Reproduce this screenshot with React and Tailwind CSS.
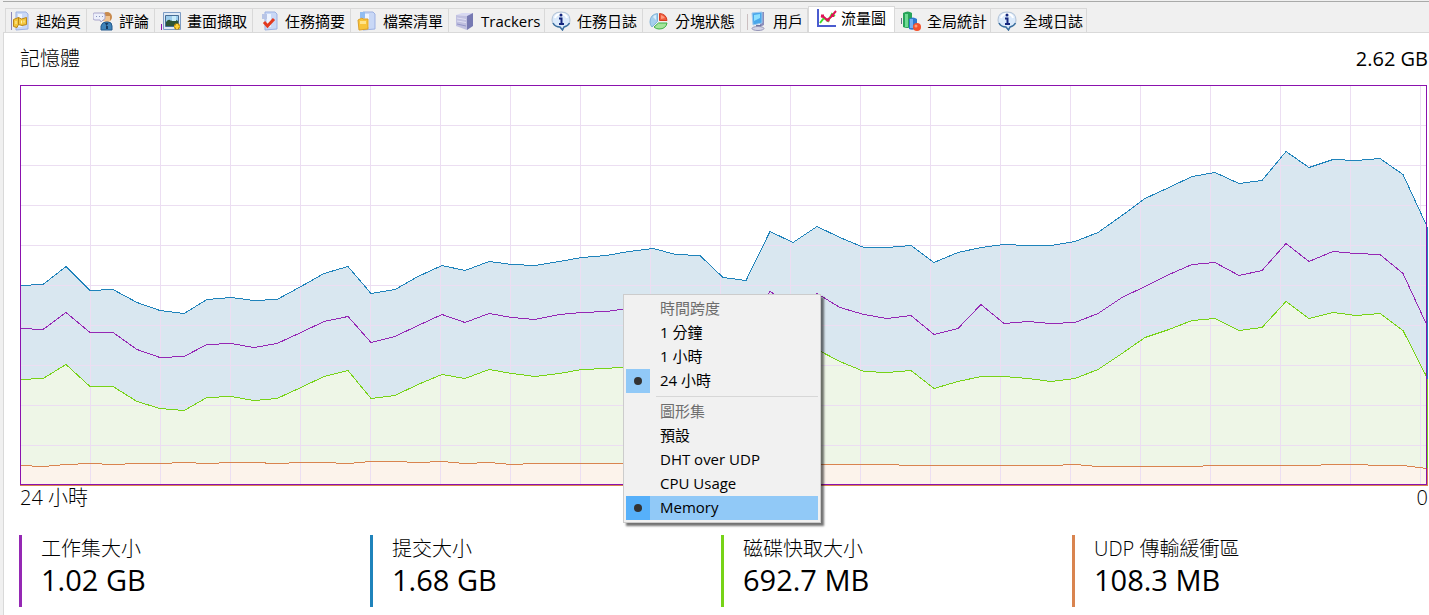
import React from "react";

const FONT = "font-['Open_Sans','Noto_Sans_CJK_TC',sans-serif]";

const PLOT_W = 1407;
const PLOT_H = 400;
const STEP = PLOT_W / 60;

const commit = [200, 199, 181, 205, 204, 217, 225, 228, 214, 212, 215, 214, 201, 188, 181, 208, 204, 191, 180, 185, 176, 179, 180, 176, 172, 170, 166, 163, 169, 170, 192, 195, 146, 157, 141, 152, 162, 162, 160, 177, 167, 162, 159, 160, 160, 156, 147, 130, 113, 102, 91, 87, 98, 95, 66, 82, 74, 75, 73, 89, 141];
const workingSet = [243, 244, 227, 247, 247, 264, 272, 271, 259, 258, 262, 258, 247, 236, 231, 257, 251, 240, 229, 237, 228, 232, 234, 229, 227, 226, 223, 221, 225, 227, 242, 244, 206, 220, 208, 222, 229, 233, 230, 249, 243, 219, 238, 236, 238, 237, 228, 212, 201, 189, 179, 177, 190, 185, 158, 176, 166, 168, 169, 188, 240];
const diskCache = [294, 293, 279, 301, 301, 316, 323, 325, 312, 311, 315, 313, 302, 291, 285, 313, 310, 299, 289, 293, 284, 288, 291, 288, 284, 283, 281, 279, 282, 283, 296, 298, 262, 272, 264, 276, 286, 287, 285, 303, 296, 291, 291, 293, 296, 293, 284, 268, 252, 244, 235, 233, 245, 242, 216, 233, 227, 230, 228, 245, 292];
const udpBuffer = [380, 381, 379, 378, 379, 378, 378, 377, 378, 377, 377, 378, 377, 377, 378, 376, 376, 377, 376, 378, 377, 379, 378, 378, 378, 378, 378, 378, 378, 378, 378, 378, 378, 379, 379, 379, 379, 379, 380, 380, 380, 380, 380, 380, 380, 379, 381, 381, 381, 381, 381, 380, 380, 380, 380, 380, 379, 379, 380, 380, 383];

const toLine = (values) =>
  values.map((v, i) => `${Math.floor(i * STEP)},${v + 0.5}`).join(" ");
const toArea = (values) => `0,${PLOT_H} ${toLine(values)} ${PLOT_W},${PLOT_H}`;

const Page = ({ children }) => (
  <svg viewBox="0 0 20 20" className="size-5 shrink-0" aria-hidden="true">
    <path d="M6 1h10l2 2v15l-12 1z" fill="#c9d8f6" stroke="#9db1e2" />
    <path d="M8 3h4v13H8z" fill="#eef4ff" />
    {children}
  </svg>
);

const HomeIcon = () => (
  <Page>
    <path d="M1.500 1v18" stroke="#8b86b8" />
    <path d="M3.500 8.500l5-2v7l-1.500 3-3.500-1zM8.500 6.500l3 1.500 5-1.500v7l-4.500 1-3.500-1z" fill="#f3c63c" stroke="#b9851a" />
    <path d="M6 10v3M11.500 9.500v3M14 9.500v2" stroke="#fff2b0" />
  </Page>
);

const CommentIcon = () => (
  <svg viewBox="0 0 20 20" className="size-5 shrink-0" aria-hidden="true">
    <circle cx="14" cy="6" r="5" fill="#c88a4d" />
    <path d="M11 5h6v5q-3 3-6 0z" fill="#f0c391" />
    <path d="M8 19v-4q1-4 5-4h2q4 0 4 4v4z" fill="#3f83b9" stroke="#22598d" />
    <path d="M12 12l1.500 3 2-3zM13 15h2v3h-2z" fill="#183a60" />
    <path d="M1 2h9q2 0 2 2v3q0 2-2 2l-2 2-1-2H2Q0 9 0 7V4q0-2 1-2z" fill="#eceffb" stroke="#a9a6cc" />
    <path d="M3 5.500h1M6 5.500h1M9 5.500h1" stroke="#8894bd" />
  </svg>
);

const CaptureIcon = () => (
  <svg viewBox="0 0 20 20" className="size-5 shrink-0" aria-hidden="true">
    <path d="M2.500 1.500h17v17h-17z" fill="#dfeaf6" stroke="#7d9cc4" />
    <path d="M4.500 4.500h13v11h-13z" fill="#9cccec" stroke="#476d94" />
    <path d="M5 11q3-4 5-1l3-2 4 2v5H5z" fill="#2e5536" />
    <path d="M11 5h4v5h-4z" fill="#c7ebfa" />
    <path d="M16 12.500v6M13 15.500h6" stroke="#b8860b" strokeWidth="4" />
    <path d="M16 13v5M13.500 15.500h5" stroke="#ffd53b" strokeWidth="2" />
    <path d="M.5 13v6" stroke="#8b12ae" />
  </svg>
);

const SummaryIcon = () => (
  <Page>
    <path d="M3 3h5v5H3z" fill="#b8c5e6" />
    <path d="M5 11l3.500 4L15 8" fill="none" stroke="#e33a1f" strokeWidth="3" />
  </Page>
);

const FilesIcon = () => (
  <Page>
    <path d="M3 1h5v6H3z" fill="#91bdf2" />
    <path d="M1 9l4-2 1 1h5v10l-9 1z" fill="#f8c43a" stroke="#dba02b" />
    <path d="M3 10h6v3H3z" fill="#ffe48b" />
  </Page>
);

const TrackerIcon = () => (
  <svg viewBox="0 0 20 20" className="size-5 shrink-0" aria-hidden="true">
    <path d="M1 4l6-2h11l-6 3z" fill="#d7d8f2" />
    <path d="M1 4l11 1v14L1 15z" fill="#c0c0e0" />
    <path d="M12 5l6-3v13l-6 4z" fill="#7679b2" />
    <path d="M2 7l9 1.500M2 10l9 1.500" stroke="#e0e0f4" />
    <path d="M2 13l9 2" stroke="#9496c8" />
  </svg>
);

const InfoIcon = () => (
  <svg viewBox="0 0 20 20" className="size-5 shrink-0" aria-hidden="true">
    <path d="M10 1q9 0 9 8 0 6-6 7l-1.500 3L9 16Q1 15 1 9q0-8 9-8z" fill="#dbeafb" stroke="#b3c3d6" />
    <path d="M2 12q2 4 7 4l2.500 3 1.500-3q4-1 5.500-4" fill="none" stroke="#3b6f9f" strokeWidth="1.5" />
    <path d="M4 7q1-4 6-4 5 0 6 4" fill="none" stroke="#fff" strokeWidth="2" />
    <path d="M8 7.500h2.500v5.500M8 13h5" fill="none" stroke="#15277e" strokeWidth="2" />
    <circle cx="10" cy="4" r="1.500" fill="#15277e" />
  </svg>
);

const PieIcon = () => (
  <svg viewBox="0 0 20 20" className="size-5 shrink-0" aria-hidden="true">
    <path d="M8.500 10.500V2.500Q1 3.500 1 11q0 3 2 5z" fill="#a5cfec" stroke="#7fb2d8" />
    <path d="M10.500 9.500v-7q7 .5 7.500 7z" fill="#ef5b3c" stroke="#d33d22" />
    <path d="M9.500 12h8.500q-1 6-8 6-3 0-5-2z" fill="#a3e59a" stroke="#3fae48" />
    <path d="M4 6q1-2 3-2v5z" fill="#d8eefb" />
    <path d="M12 4q3 1 4 3l-4 1z" fill="#ff9a7c" />
  </svg>
);

const PeerIcon = () => (
  <svg viewBox="0 0 20 20" className="size-5 shrink-0" aria-hidden="true">
    <path d="M.5 3v16" stroke="#cbbfc0" />
    <path d="M13 1h4v13l-4 2z" fill="#8b8dbb" />
    <path d="M5 2l10-1v11L6 14z" fill="#4aa7ea" stroke="#9fc9ef" />
    <path d="M7 4l6-1v4l-6 3z" fill="#8ee0ff" />
    <path d="M9 14h5v3H9z" fill="#73769f" />
    <ellipse cx="11" cy="17.500" rx="6" ry="2" fill="#d5d5e6" stroke="#9696b8" />
  </svg>
);

const GraphIcon = () => (
  <svg viewBox="0 0 20 20" className="size-5 shrink-0" aria-hidden="true">
    <path d="M1 1v17h18" fill="none" stroke="#4a5bcf" strokeWidth="2" />
    <path d="M3 15l4-5 4 3 4-7 3 2" fill="none" stroke="#3ddc2d" strokeWidth="2" />
    <path d="M4 8l3 1 3 3 4-3 5-6" fill="none" stroke="#df1457" strokeWidth="2" />
    <path d="M4 6.500h3v3H4zM9.500 10.500h3v3h-3zM14 6h3v3h-3z" fill="#df1457" />
  </svg>
);

const StatsIcon = () => (
  <svg viewBox="0 0 20 20" className="size-5 shrink-0" aria-hidden="true">
    <path d="M.5 7v6" stroke="#65728a" />
    <path d="M2 2q5-3 9 0v14q-5 2-9 0z" fill="#27a35a" />
    <path d="M4 3h3v13H4z" fill="#6fdb93" />
    <path d="M8 8q4-3 8 0v9q-4 3-8 1z" fill="#2f79cf" />
    <path d="M9 8h3v9H9z" fill="#75b2f2" />
    <circle cx="16" cy="16" r="4" fill="#f4512c" />
    <circle cx="15" cy="15" r="1.500" fill="#ff9d78" />
  </svg>
);

const tabs = [
  { label: "起始頁", Icon: HomeIcon, width: "w-[82px]" },
  { label: "評論", Icon: CommentIcon, width: "w-[68px]" },
  { label: "畫面擷取", Icon: CaptureIcon, width: "w-[98px]" },
  { label: "任務摘要", Icon: SummaryIcon, width: "w-[98px]" },
  { label: "檔案清單", Icon: FilesIcon, width: "w-[98px]" },
  { label: "Trackers", Icon: TrackerIcon, width: "w-[96px]" },
  { label: "任務日誌", Icon: InfoIcon, width: "w-[98px]" },
  { label: "分塊狀態", Icon: PieIcon, width: "w-[98px]" },
  { label: "用戶", Icon: PeerIcon, width: "w-[67px]" },
  { label: "流量圖", Icon: GraphIcon, width: "w-[87px]", active: true },
  { label: "全局統計", Icon: StatsIcon, width: "w-[96px]" },
  { label: "全域日誌", Icon: InfoIcon, width: "w-[96px]" },
];

function TabBar() {
  return (
    <div role="tablist" className="flex items-end border-t border-[#a9aaa9] pt-1 pl-0.5">
      {tabs.map(({ label, Icon, width, active }) => (
        <button
          key={label}
          type="button"
          role="tab"
          aria-selected={Boolean(active)}
          className={`flex shrink-0 items-center text-[15px] leading-5 whitespace-nowrap ${width} ${
            active
              ? "-mb-px h-[27px] gap-1 border-x border-t border-[#d9d9d9] bg-white pb-1 pl-2"
              : "h-6 gap-1.5 border-t border-r border-[#d9d9d9] pl-1.5 first:border-l first:pl-1"
          }`}
        >
          <Icon />
          {label}
        </button>
      ))}
    </div>
  );
}

function Series({ values, stroke }) {
  return (
    <polyline
      points={toLine(values)}
      fill="none"
      stroke={stroke}
      strokeWidth="1"
      vectorEffect="non-scaling-stroke"
      shapeRendering="crispEdges"
    />
  );
}

function Chart() {
  const columns = Array.from({ length: 20 }, (_, i) => (i + 1) * 70 + 0.5);
  const rows = Array.from({ length: 9 }, (_, i) => (i + 1) * 40 + 0.5);
  return (
    <svg
      viewBox={`0 0 ${PLOT_W + 1} 401`}
      preserveAspectRatio="none"
      className="block h-[401px] w-full"
      role="img"
      aria-label="記憶體"
    >
      <polygon points={toArea(commit)} fill="#d9e7f0" />
      <polygon points={toArea(diskCache)} fill="#eef6e7" />
      <polygon points={toArea(udpBuffer)} fill="#fcf3eb" />
      <g stroke="#ecdef2" strokeWidth="1" shapeRendering="crispEdges">
        {columns.map((x) => (
          <line key={x} x1={x} x2={x} y1="0" y2={PLOT_H} />
        ))}
        {rows.map((y) => (
          <line key={y} x1="0" x2={PLOT_W} y1={y} y2={y} />
        ))}
      </g>
      <Series values={commit} stroke="#1f83bb" />
      <Series values={workingSet} stroke="#9528b4" />
      <Series values={diskCache} stroke="#77d317" />
      <Series values={udpBuffer} stroke="#d9844f" />
      <g fill="none" shapeRendering="crispEdges">
        <path d="M1407.500 142V401" stroke="#1f83bb" />
        <path d="M1407.500 294V401" stroke="#77d317" />
        <path d="M1407.500 383V401M0 400.500H1408" stroke="#d9844f" />
        <path d="M.5 .5H1406.500V399.500H.5z" stroke="#8b12ae" />
      </g>
    </svg>
  );
}

const menuGroups = [
  {
    title: "時間跨度",
    items: [{ label: "1 分鐘" }, { label: "1 小時" }, { label: "24 小時", checked: true }],
  },
  {
    title: "圖形集",
    items: [
      { label: "預設" },
      { label: "DHT over UDP" },
      { label: "CPU Usage" },
      { label: "Memory", checked: true, hovered: true },
    ],
  },
];

function ContextMenu() {
  return (
    <div
      role="menu"
      className="absolute top-[209px] left-[603px] w-[198px] border border-[#ccc] bg-[#f1f1f1] p-0.5 text-[15px] leading-[22px] shadow-[3px_3px_2px_rgba(0,0,0,0.55)]"
    >
      {menuGroups.map(({ title, items }, g) => (
        <div key={title} role="group" aria-label={title}>
          {g > 0 && <div role="separator" className="my-[3px] ml-[30px] border-t border-[#d7d7d7]" />}
          <div className="pb-0.5 pl-[34px] text-[#6d6d6d]">{title}</div>
          {items.map(({ label, checked, hovered }) => (
            <button
              key={label}
              type="button"
              role="menuitemradio"
              aria-checked={Boolean(checked)}
              className={`flex w-full items-center gap-2.5 text-left ${hovered ? "bg-[#91c9f7]" : ""}`}
            >
              <span
                className={`flex size-6 shrink-0 items-center justify-center ${
                  hovered ? "bg-[#56b0fa]" : checked ? "bg-[#91c9f7]" : ""
                }`}
              >
                {checked && <span className="size-2 rounded-full bg-[#333]" />}
              </span>
              <span className="pb-0.5">{label}</span>
            </button>
          ))}
        </div>
      ))}
    </div>
  );
}

const stats = [
  { label: "工作集大小", value: "1.02 GB", bar: "border-[#9528b4]" },
  { label: "提交大小", value: "1.68 GB", bar: "border-[#1f83bb]" },
  { label: "磁碟快取大小", value: "692.7 MB", bar: "border-[#77d317]" },
  { label: "UDP 傳輸緩衝區", value: "108.3 MB", bar: "border-[#d9844f]" },
];

export default function App() {
  return (
    <div className={`flex min-h-screen flex-col overflow-hidden bg-[#f0f0f0] pt-px pl-[3px] text-black ${FONT}`}>
      <TabBar />
      <main className="grow border-t border-l border-[#d9d9d9] bg-white pt-3 pr-px pl-4">
        <header className="flex items-center justify-between text-xl leading-7">
          <h1 className="font-light">記憶體</h1>
          <span>2.62 GB</span>
        </header>
        <div className="relative mt-3">
          <Chart />
          <ContextMenu />
        </div>
        <div className="flex justify-between text-xl leading-6 font-light">
          <span>24 小時</span>
          <span>0</span>
        </div>
        <dl className="mt-[25px] mr-[5px] -ml-px grid grid-cols-4 pb-2">
          {stats.map(({ label, value, bar }) => (
            <div key={label} className={`h-[72px] border-l-3 pl-[19px] ${bar}`}>
              <dt className="text-xl leading-7 font-light">{label}</dt>
              <dd className="text-[29px] leading-[34px]">{value}</dd>
            </div>
          ))}
        </dl>
      </main>
    </div>
  );
}
